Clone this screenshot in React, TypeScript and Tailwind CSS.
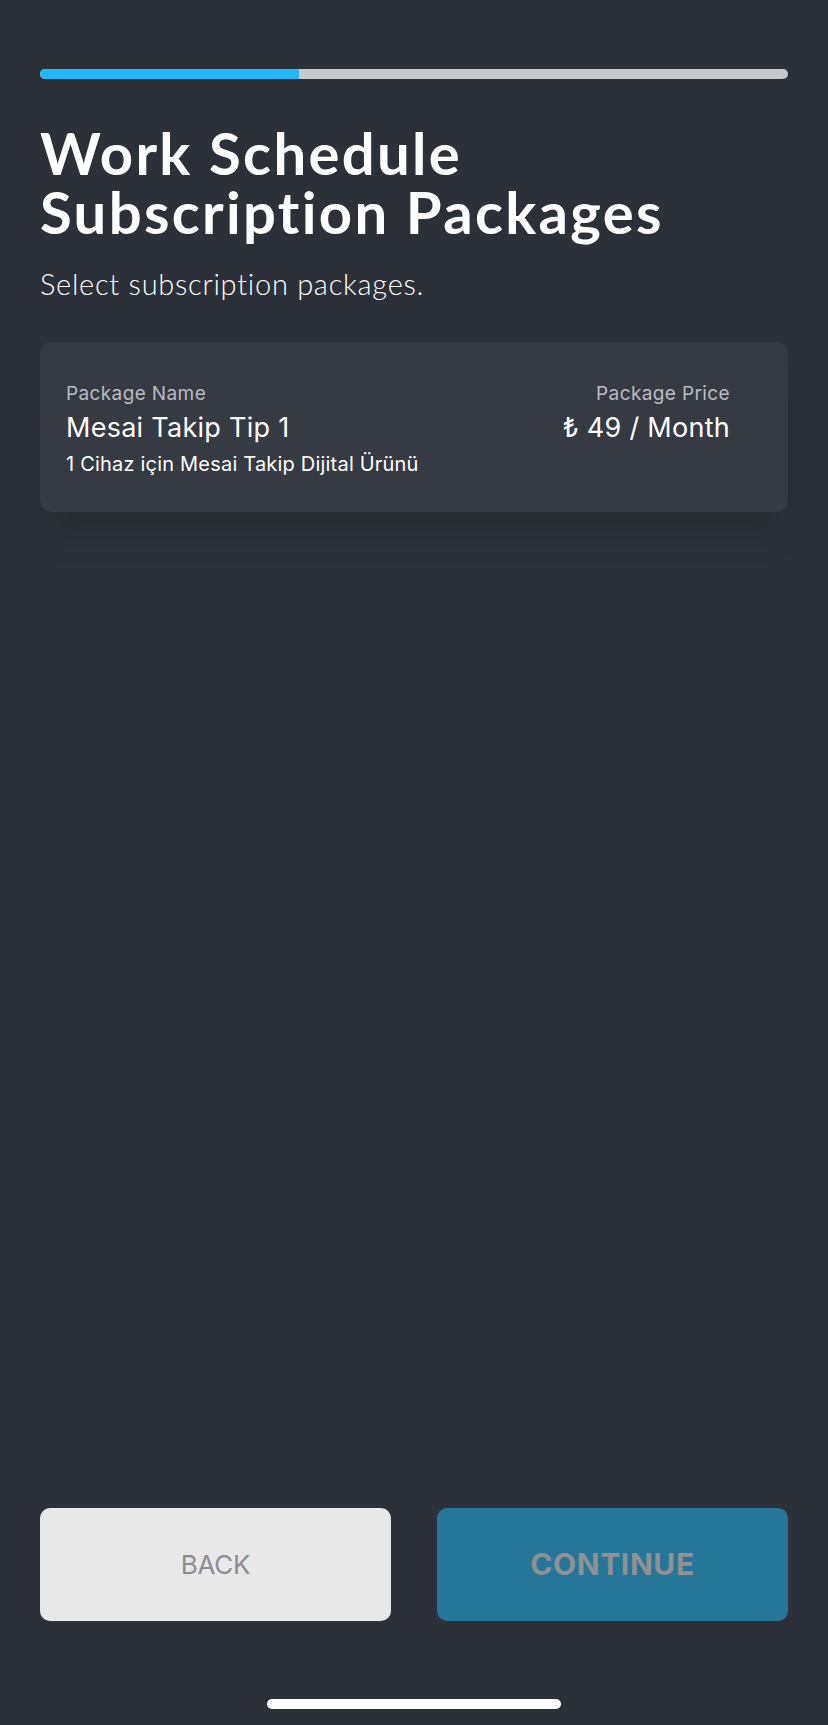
import React from "react";

const TITLE_FONT = "font-['Lato','Inter',sans-serif]";
const BODY_FONT = "font-['Inter','Roboto',sans-serif]";

function ProgressBar({ value }: { value: number }) {
  return (
    <div className="h-[10px] w-full rounded-full bg-[#c8c9cc] overflow-hidden">
      <div className="h-full bg-[#22b8fb]" style={{ width: `${value}%` }} />
    </div>
  );
}

function PackageCard() {
  return (
    <div
      className={`rounded-[12px] bg-[#363a43] h-[170px] pl-[26px] pr-[58px] pt-[40px] flex justify-between shadow-[0_34px_30px_-8px_rgba(0,0,0,0.10)] ${BODY_FONT}`}
    >
      <div className="flex flex-col">
        <span className="text-[19px] leading-[24px] tracking-[0.02em] text-[#b9bcc3]">
          Package Name
        </span>
        <span className="text-[27px] leading-[34px] tracking-[0.01em] text-white mt-[5px]">
          Mesai Takip Tip 1
        </span>
        <span className="text-[20px] leading-[26px] tracking-[0.01em] text-white mt-[6px]">
          1 Cihaz için Mesai Takip Dijital Ürünü
        </span>
      </div>
      <div className="flex flex-col items-end">
        <span className="text-[19px] leading-[24px] tracking-[0.02em] text-[#b9bcc3]">
          Package Price
        </span>
        <span className="text-[27px] leading-[34px] tracking-[0.01em] text-white mt-[5px]">
          ₺ 49 / Month
        </span>
      </div>
    </div>
  );
}

export default function App() {
  return (
    <main className="w-[828px] h-[1725px] bg-[#2c3038] flex flex-col px-[40px]">
      <div className="pt-[69px]">
        <ProgressBar value={34.6} />
      </div>

      <header className="mt-[44px]">
        <h1
          className={`${TITLE_FONT} font-bold text-[58px] leading-[59px] tracking-[0.04em] text-white`}
        >
          Work Schedule
          <br />
          Subscription Packages
        </h1>
        <p
          className={`${TITLE_FONT} font-light text-[29px] leading-[36px] tracking-[0.025em] text-white mt-[25px]`}
        >
          Select subscription packages.
        </p>
      </header>

      <section className="mt-[40px]">
        <PackageCard />
      </section>

      <div className="flex-1" />

      <div className={`grid grid-cols-2 gap-[46px] ${BODY_FONT}`}>
        <button className="h-[113px] rounded-[10px] bg-[#e8e8e9] text-[26px] tracking-[-0.01em] text-[#8c8d91]">
          BACK
        </button>
        <button className="h-[113px] rounded-[10px] bg-[#26769a] text-[30px] font-bold tracking-[0.02em] text-[#8f9193]">
          CONTINUE
        </button>
      </div>

      <div className="flex justify-center pt-[78px] pb-[16px]">
        <div className="h-[10px] w-[294px] rounded-full bg-white" />
      </div>
    </main>
  );
}
